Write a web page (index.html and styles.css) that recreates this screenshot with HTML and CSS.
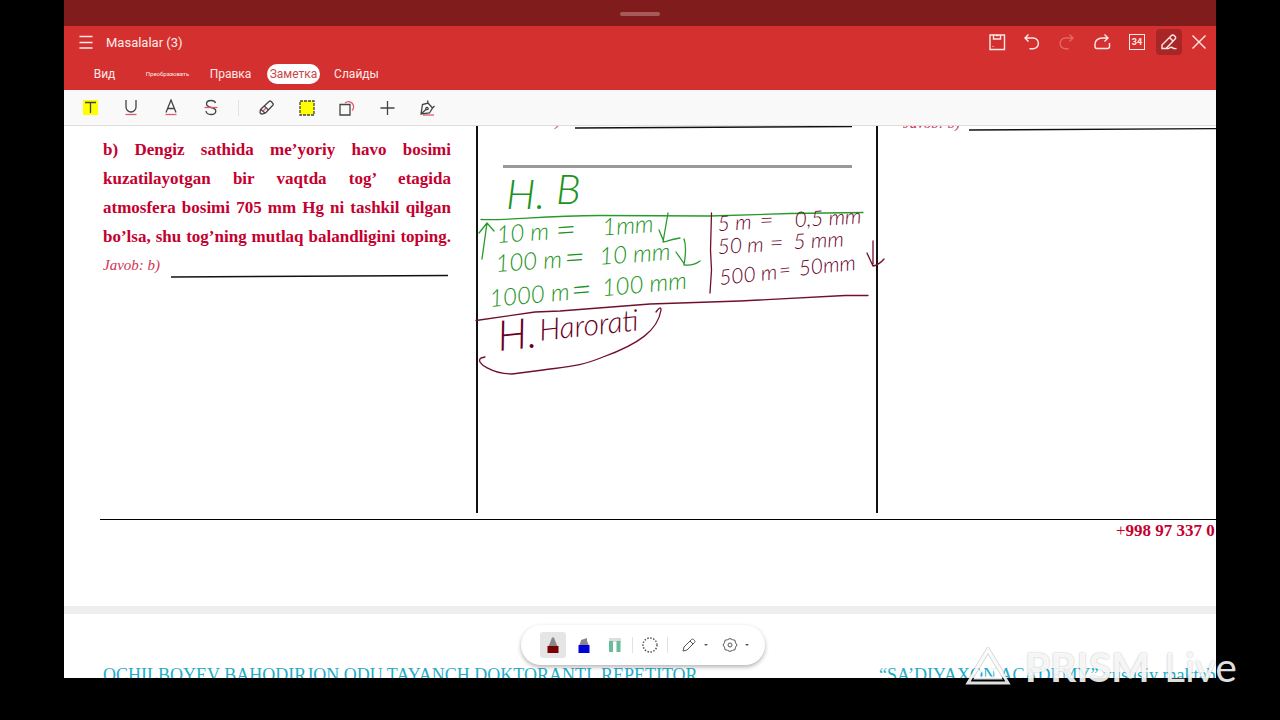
FILE: index.html
```html
<!DOCTYPE html>
<html lang="uz">
<head>
<meta charset="utf-8">
<meta name="viewport" content="width=device-width, initial-scale=1">
<title>Masalalar (3)</title>
<link rel="stylesheet" href="styles.css">
</head>
<body>
<div class="app">
  <div class="status"><span class="handle"></span></div>
  <header class="header">
    <div class="titlebar">
      <button class="icon-btn" aria-label="Menu"><svg width="16" height="16" viewBox="0 0 16 16"><path d="M1.500 2.500h13M1.500 8.500h13M1.500 14h13"/></svg></button>
      <h1 class="title">Masalalar (3)</h1>
      <div class="actions">
        <button class="icon-btn" aria-label="Save"><svg width="18" height="18" viewBox="0 0 18 18"><path d="M2 2h14.500v14.500H2zM5.500 2v4h7V2M8 2.500h2.500M5 13v.8"/></svg></button>
        <button class="icon-btn" aria-label="Undo"><svg width="18" height="18" viewBox="0 0 18 18"><path d="M5.500 1.500 2 5l3.500 3.500M2.500 5h7.500a5.300 5.300 0 0 1 0 10.800H6.500"/></svg></button>
        <button class="icon-btn faded" aria-label="Redo"><svg width="18" height="18" viewBox="0 0 18 18"><path d="M11.500 1.500 15 5l-3.500 3.500M14.500 5H7.500a5.300 5.300 0 0 0 0 10.800H10.500"/></svg></button>
        <button class="icon-btn" aria-label="Share"><svg width="18" height="18" viewBox="0 0 18 18"><path d="M11.500 1.500 15 5l-3.500 3.500M14.500 5H9.500C4.500 5 2 8 2 11v2.500a2 2 0 0 0 2 2h10.500a2 2 0 0 0 2-2V10"/></svg></button>
        <button class="icon-btn" aria-label="Page"><span class="page-no">34</span></button>
        <div class="tight">
          <button class="icon-btn pressed" aria-label="Edit"><svg width="18" height="18" viewBox="0 0 18 18"><path d="M2 15.500V12L11.500 2.500a1.800 1.800 0 0 1 2.600 0l1 1a1.800 1.800 0 0 1 0 2.600L6 15.500zM9.500 4.500l3.700 3.700M2 15.500h6c2 0 2-2 4-1s2 1.500 4.500 1"/></svg></button>
          <button class="icon-btn" aria-label="Close"><svg width="16" height="16" viewBox="0 0 16 16"><path d="m1.500 1.500 13 13M14.500 1.500l-13 13"/></svg></button>
        </div>
      </div>
    </div>
    <nav class="tabs">
      <button class="tab">Вид</button>
      <button class="tab small">Преобразовать</button>
      <button class="tab">Правка</button>
      <button class="tab active"><span>Заметка</span></button>
      <button class="tab">Слайды</button>
    </nav>
  </header>
  <div class="tools">
    <button class="tool" aria-label="Highlight"><svg width="18" height="18" viewBox="0 0 18 18"><path class="yellow" d="M1 1h15v15H1z"/><path d="M3 3.500h11M8.500 3.500v10.500"/></svg></button>
    <button class="tool" aria-label="Underline"><svg width="18" height="18" viewBox="0 0 18 18"><path d="M4 1v7a5 5 0 0 0 10 0V1"/><path class="pink" d="M3.500 15.500h11"/></svg></button>
    <button class="tool" aria-label="Text"><svg width="18" height="18" viewBox="0 0 18 18"><path d="M4 13.500 9 1l5 12.500M5.500 9.500h7"/><path class="pink" d="M3.500 15.500h11"/></svg></button>
    <button class="tool" aria-label="Strikethrough"><svg width="18" height="18" viewBox="0 0 18 18"><path d="M13.500 4C13 2 11.500 1.500 9 1.500 6 1.500 4.500 3 4.500 5c0 4.500 9.300 2.500 9.300 7 0 2.300-2 3.500-4.800 3.500s-4.700-1-5-3.500"/><path class="pink" d="M2.500 8.500h13"/></svg></button>
    <span class="rule"></span>
    <button class="tool" aria-label="Marker"><svg width="18" height="18" viewBox="0 0 18 18"><path d="M2.500 10.500 11 2.500q1-1 2.200 0l1.600 1.700q1 1 0 2L7.500 14l-3.500 1q-1.500 0-2-1.500zM3 10.500l4.200 3.700M6.500 7.200l4.200 4"/><path class="pink" d="m5 12 3-3"/></svg></button>
    <button class="tool" aria-label="Area"><svg width="18" height="18" viewBox="0 0 18 18"><path class="yellow dashed" d="M2 2h14v14H2z"/></svg></button>
    <button class="tool" aria-label="Shapes"><svg width="18" height="18" viewBox="0 0 18 18"><path class="pink" d="M7 4a5 5 0 1 1 7 7.500"/><path d="M2 5.500h10v10.500H2z"/></svg></button>
    <button class="tool" aria-label="Add"><svg width="18" height="18" viewBox="0 0 18 18"><path d="M9.500 2v14M2.500 9h14"/></svg></button>
    <button class="tool" aria-label="Signature"><svg width="18" height="18" viewBox="0 0 18 18"><path class="pink" d="M5 16h11"/><path d="m3 15 1.500-9.500L10 4l4.500 5-3 5zM3 15l5.500-5M9.500 1.500l.5 2.500 4.500 5 2-2"/><circle cx="9" cy="9.500" r="1.200"/></svg></button>
  </div>

  <main class="doc">
    <section class="sheet">
      <div class="columns">
        <article class="col first">
          <p class="task"><span>b) Dengiz sathida me’yoriy havo bosimi</span><span>kuzatilayotgan bir vaqtda tog’ etagida</span><span>atmosfera bosimi 705 mm Hg ni tashkil qilgan</span><span>bo’lsa, shu tog’ning mutlaq balandligini toping.</span></p>
          <div class="answer"><em>Javob: b)</em><svg class="blank" height="4" viewBox="0 0 278 4" preserveAspectRatio="none"><path d="M0 3 278 1.500"/></svg></div>
        </article>
        <article class="col">
          <div class="answer cut"><em>Javob: b)</em><svg class="blank" height="4" viewBox="0 0 278 4" preserveAspectRatio="none"><path d="M0 3 278 1.500"/></svg></div>
          <hr class="divider">
          <svg class="ink" width="440" height="260" viewBox="477 126 440 260" role="img" aria-label="Notes">
            <g class="green">
              <path d="M481 219.500C510 221 540 215.500 600 215.500L710 216 790 213.500 863 212.500"/>
              <path d="M482 259 487 223M479 233l8-10 7 8M668 213l-5 29M659 230l5 12q9-3 16-4M684 239q3 8 0 26M676 252l9 13q8 1 15-4"/>
              <text class="big" x="506" y="209">H.</text><text class="big" x="556" y="204">B</text>
              <g transform="rotate(-4 497 243)"><text x="497" y="243">10 m</text><text class="equals" x="556" y="247">=</text><text x="603" y="243">1mm</text></g>
              <g transform="rotate(-4 496 272)"><text x="496" y="272">100 m</text><text class="equals" x="565" y="275">=</text><text x="600" y="272">10 mm</text></g>
              <g transform="rotate(-5 490 307)"><text x="490" y="307">1000 m</text><text class="equals" x="572" y="310">=</text><text x="603" y="306">100 mm</text></g>
            </g>
            <g class="maroon">
              <path d="M476 320.500 535 312 560 311 650 304 740 301 845 295.500H868M711.500 213 710.500 250 711.500 270 710 293"/>
              <path d="M873 241v23M867 253l6 13q6-1 11-7M656 312q5-7 5-2c-3 20-22 34-58 47-22 9-30 9-60 13l-31 4c-18 0-38-11-31-16l4-1"/>
              <g transform="rotate(-3 718 231)"><text class="fine" x="718" y="231">5 m</text><text x="760" y="231">=</text><text class="fine" x="795" y="231">0,5 mm</text></g>
              <g transform="rotate(-3 718 254)"><text class="fine" x="718" y="254">50 m</text><text x="770" y="254">=</text><text class="fine" x="794" y="253">5 mm</text></g>
              <g transform="rotate(-6 720 285)"><text class="fine" x="720" y="285">500 m</text><text class="fine" x="780" y="284">=</text><text class="fine" x="800" y="284">50mm</text></g>
              <g transform="rotate(-6 499 351)"><text class="big" x="499" y="351">H.</text><text class="mid" x="541" y="345">Harorati</text></g>
            </g>
          </svg>
        </article>
        <article class="col">
          <div class="answer cut"><em>Javob: b)</em><svg class="blank" height="4" viewBox="0 0 278 4" preserveAspectRatio="none"><path d="M0 3 278 1.500"/></svg></div>
        </article>
      </div>
      <footer class="phone"><span>+</span>998 97 337 0</footer>
    </section>
    <section class="sheet next">
      <span>OCHILBOYEV BAHODIRJON ODU TAYANCH DOKTORANTI, REPETITOR</span>
      <span class="academy">“SA’DIYAXON ACADEMY” xususiy maktab</span>
    </section>

    <div class="pens">
      <button class="pen chosen" aria-label="Red pen"><svg width="16" height="18" viewBox="0 0 16 18"><path class="grey" d="M5 7 7 1.500h2L11 7l2 4H3z"/><path class="darkred" d="M2.500 10h11v7h-11z"/></svg></button>
      <button class="pen" aria-label="Blue marker"><svg width="16" height="18" viewBox="0 0 16 18"><path class="grey" d="M5 4 11 2v3l2 5H3l2-5z"/><path class="blue" d="M2.500 9h11v8h-11z"/></svg></button>
      <button class="pen" aria-label="Green highlighter"><svg width="16" height="18" viewBox="0 0 16 18"><path class="pale" d="M2 2h12v4H2z"/><path class="mint" d="M2 5h4v11H2zM9.500 5h4v11h-4z"/></svg></button>
      <span class="rule"></span>
      <button class="pen" aria-label="Lasso"><svg width="18" height="18" viewBox="0 0 18 18"><circle class="dots" cx="9" cy="9" r="7"/></svg></button>
      <span class="rule"></span>
      <button class="pen wide pencil" aria-label="Pencil"><svg width="16" height="16" viewBox="0 0 16 16"><path d="m2 14 1-4 7.500-7.500q1-1 2 0l1 1q1 1 0 2L6 13zM9 4l3 3"/></svg><i class="caret"></i></button>
      <button class="pen wide" aria-label="Settings"><svg width="16" height="16" viewBox="0 0 16 16"><path d="m8 1.500 2.500 1.200 2.500.6.500 2.500L15 8l-1.500 2.200-.5 2.500-2.500.6L8 14.500l-2.500-1.200-2.500-.6-.5-2.500L1 8l1.500-2.200.5-2.500 2.500-.6z"/><circle cx="8" cy="8" r="2"/></svg><i class="caret"></i></button>
    </div>
  </main>
</div>
<div class="watermark"><svg width="46" height="40" viewBox="0 0 46 40"><path class="halo" d="M23 3 43 36H3z"/><path d="M23 3 43 36H3zM23 13 35 31H11z"/></svg><b>PRISM</b><span>Live</span></div>
</body>
</html>
```
FILE: styles.css
```css
* { box-sizing: border-box; }
body { margin: 0; background: #000; font-family: Roboto, sans-serif; overflow: hidden; }
button { border: 0; padding: 0; background: none; color: inherit; font: inherit; }
svg { display: block; fill: none; stroke: currentColor; }
.app { display: flex; flex-direction: column; height: calc(100vh - 42px); margin: 0 5%; background: #fff; }
.status { display: flex; justify-content: center; align-items: center; height: 26px; padding-top: 2px; background: #801c1c; }
.handle { width: 40px; height: 4px; border-radius: 2px; background: #a65a5a; }
.header { background: #d53030; color: #ffebe6; height: 64px; }
.titlebar { display: flex; align-items: center; height: 32px; padding: 0 4px 0 9px; }
.title { margin: 0 0 0 7px; font-size: 13px; font-weight: 400; }
.icon-btn { display: flex; justify-content: center; align-items: center; width: 26px; height: 26px; border-radius: 4px; }
.titlebar svg { stroke-width: 1.4; }
.actions { display: flex; gap: 9px; margin-left: auto; }
.tight { display: flex; gap: 4px; margin-left: -3px; }
.faded { opacity: .3; }
.pressed { background: #a92626; }
.page-no { width: 16px; border: 1px solid; font-size: 9px; line-height: 14px; font-weight: 700; text-align: center; }
.tabs { display: flex; align-items: center; height: 32px; padding-left: 9px; }
.tab { width: 63px; font-size: 12px; line-height: 20px; text-align: center; }
.small { font-size: 6px; }
.active span { display: inline-block; padding: 0 3px; border-radius: 10px; background: #fff; color: #c84747; }
.tools { display: flex; align-items: center; height: 36px; padding-left: 7px; background: #f9f9f9; border-bottom: 1px solid #ddd; color: #444; }
.tool { display: flex; justify-content: center; width: 40px; }
.tool svg { stroke-width: 1.3; }
.rule { width: 1px; height: 16px; background: #e2e2e2; }
.tools .rule { margin: 0 8px 0 7px; }
.pink { stroke: #df5c70; }
.yellow { fill: #ff0; stroke: none; }
.dashed { stroke: #444; stroke-dasharray: 3 1; }

.doc { position: relative; flex: 1; min-height: 0; overflow: hidden; font-family: "Liberation Serif", serif; }
.sheet { height: 480px; padding-left: 36px; }
.columns { display: grid; grid-template-columns: 377px 400px 1fr; height: 387px; }
.col { position: relative; padding: 0 25px; border-left: 2px solid #111; }
.col.first { padding: 9px 26px 0 3px; border: 0; }
.col:nth-child(2) { margin-left: -1px; }
.col:nth-child(3) { margin-left: -1px; padding-right: 0; }
.task { margin: 0; color: #c4002f; font-size: 17px; line-height: 29px; font-weight: 700; }
.task span { display: block; text-align-last: justify; white-space: nowrap; }
.answer { display: flex; gap: 8px; align-items: flex-end; height: 29px; line-height: 29px; font-size: 15px; color: #cf3355; padding-right: 3px; }
.answer em { width: 60px; white-space: nowrap; }
.blank { flex: 1; min-width: 0; stroke: #111; stroke-width: 1.4; margin-bottom: 2px; }
.cut { margin-top: -19px; height: 22px; gap: 12px; padding: 0; line-height: 16px; }
.cut .blank { margin-bottom: 0; }
.col:nth-child(3) .cut { padding-top: 2px; height: 24px; gap: 6px; }
.divider { margin: 36px 0 0; border: 0; height: 3px; background: #999; }
.ink { position: absolute; top: 0; left: -1px; overflow: visible; stroke-width: 1.3; stroke-linecap: round; stroke-linejoin: round; z-index: 1; }
.ink text { stroke: none; font: italic 300 24px Lato, sans-serif; }
.ink .big { font-size: 42px; }
.ink .mid { font-size: 30px; }
.ink .equals { font-size: 36px; }
.ink .fine { font-size: 21px; }
.green { stroke: #269b2b; }
.green text { fill: #1c9422; }
.maroon { stroke: #70102b; }
.maroon text { fill: #68001f; }
.phone { margin-top: 6px; padding-left: 1016px; border-top: 1px solid #000; white-space: nowrap; font-size: 17px; line-height: 22px; font-weight: 700; color: #c4002f; }
.phone span { font-weight: 400; }
.next { display: flex; height: 72px; padding: 52px 0 0 39px; border-top: 8px solid #eee; white-space: nowrap; font-size: 18px; line-height: 18px; color: #22acc8; }
.next span:first-child { width: 776px; flex: none; }

.pens { position: absolute; left: calc(50% - 119px); bottom: 13px; display: flex; align-items: center; height: 40px; padding: 0 7px 0 19px; gap: 5px; border-radius: 20px; background: #fff; color: #555; box-shadow: 0 2px 4px rgba(0,0,0,.3); z-index: 2; }
.pen { display: flex; justify-content: center; align-items: center; width: 26px; height: 26px; border-radius: 3px; }
.pens .rule { margin: 0 -1px; }
.wide { width: 36px; gap: 7px; justify-content: flex-start; }
.pencil { margin-left: 9px; }
.chosen { background: #e5e5e5; }
.caret { border: 2px solid transparent; border-top-color: #555; border-bottom: 0; }
.grey { fill: #888; stroke: none; }
.darkred { fill: #780000; stroke: none; }
.blue { fill: #0000d8; stroke: none; }
.pale { fill: #ddd; stroke: none; }
.mint { fill: #67bd9b; stroke: none; }
.dots { stroke-width: 1.5; stroke-dasharray: 1.5 1.5; }
.watermark { position: absolute; right: 43px; bottom: 30px; display: flex; align-items: center; gap: 14px; font: 400 41px/46px Lato, sans-serif; color: rgba(255,255,255,.88); text-shadow: 0 0 2px rgba(0,0,0,.3); z-index: 3; }
.watermark svg { stroke-width: 3; }
.watermark .halo { stroke: rgba(0,0,0,.15); stroke-width: 5; }
```
